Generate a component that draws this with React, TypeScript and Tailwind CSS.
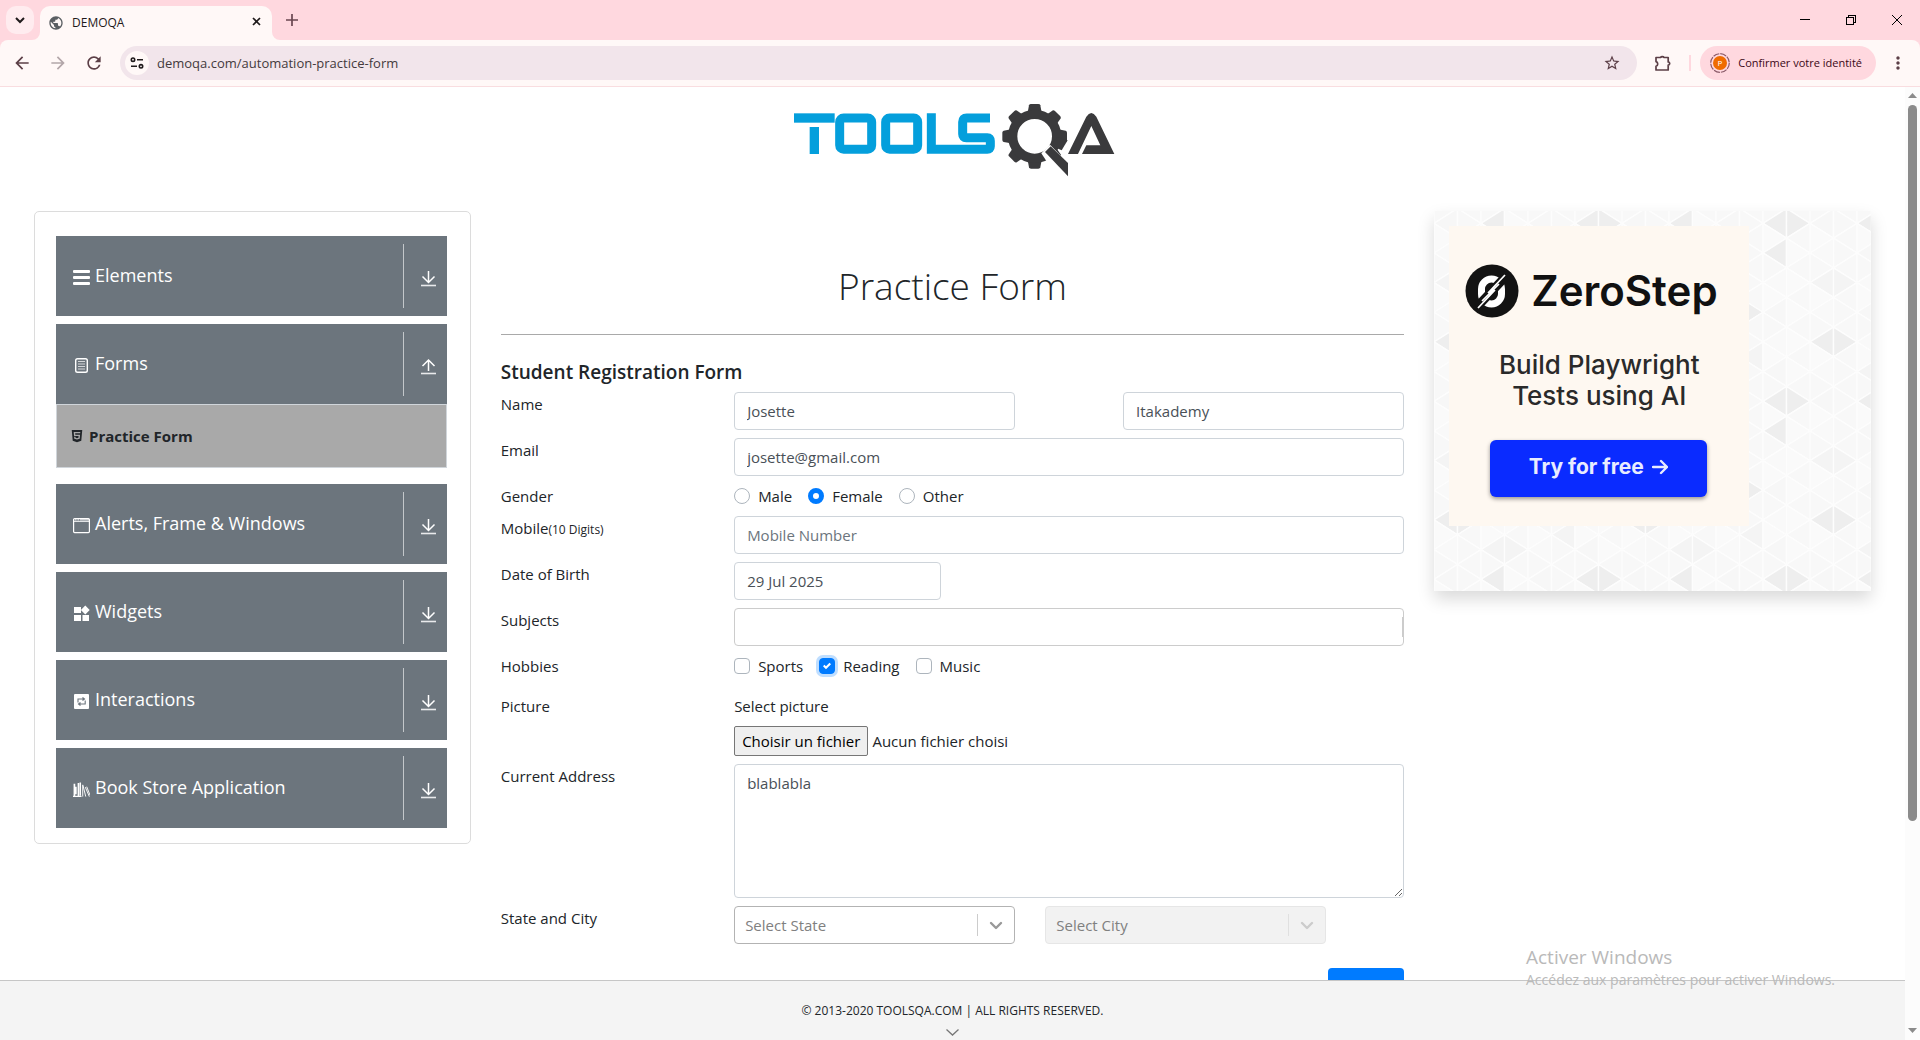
import React, { useState } from "react";
import { MdArrowBack, MdArrowForward, MdMoreVert, MdPublic, MdRefresh, MdStarBorder } from "react-icons/md";
import { FaHtml5 } from "react-icons/fa";

/* ---------- Browser chrome ---------- */

function TabStrip() {
  return (
    <div className="flex h-10 items-end bg-[#ffd8df] text-[#1f1a1b]">
      <button aria-label="Rechercher dans les onglets" className="mb-[6px] ml-[6px] flex h-7 w-7 items-center justify-center rounded-[10px] bg-[#ffecef]">
        <svg className="h-2 w-[10px]" viewBox="0 0 10 8" fill="none" stroke="#1f1a1b" strokeWidth="2">
          <path d="M1 2l4 4 4-4" />
        </svg>
      </button>
      <svg className="h-2 w-2 -ml-[2px]" viewBox="0 0 8 8" fill="#fff8f7">
        <path d="M8 0v8H0a8 8 0 0 0 8-8z" />
      </svg>
      <div className="flex h-[34px] w-[232px] items-center rounded-t-[10px] bg-[#fff8f7] pr-2 pl-2">
        <MdPublic className="h-4 w-4 text-[#5b5f63]" />
        <span className="ml-2 flex-1 text-[12px] leading-4">DEMOQA</span>
        <button aria-label="Fermer l'onglet" className="flex h-4 w-4 items-center justify-center pb-1">
          <svg className="h-[9px] w-[9px]" viewBox="0 0 9 9" stroke="#1f1a1b" strokeWidth="1.7">
            <path d="M1 1l7 7M8 1l-7 7" />
          </svg>
        </button>
      </div>
      <svg className="h-2 w-2" viewBox="0 0 8 8" fill="#fff8f7">
        <path d="M0 0v8h8a8 8 0 0 1-8-8z" />
      </svg>
      <button aria-label="Nouvel onglet" className="mb-[14px] ml-[6px] flex h-3 w-3 items-center justify-center">
        <svg className="h-3 w-3" viewBox="0 0 12 12" stroke="#6a4650" strokeWidth="1.7">
          <path d="M6 0v12M0 6h12" />
        </svg>
      </button>
      <div className="mb-[14px] ml-auto flex h-3 items-center gap-9 pr-[18px]">
        <button aria-label="Réduire">
          <svg className="h-[10px] w-[10px]" viewBox="0 0 10 10" stroke="#000" shapeRendering="crispEdges">
            <path d="M0 4.500h10" />
          </svg>
        </button>
        <button aria-label="Restaurer">
          <svg className="h-[10px] w-[10px]" viewBox="0 0 10 10" fill="none" stroke="#000" shapeRendering="crispEdges">
            <path d="M.5 2.500h7v7h-7zM2.500 2.500v-2h7v7h-2" />
          </svg>
        </button>
        <button aria-label="Fermer">
          <svg className="h-[10px] w-[10px]" viewBox="0 0 10 10" stroke="#000">
            <path d="M0 0l10 10M10 0L0 10" />
          </svg>
        </button>
      </div>
    </div>
  );
}

function Toolbar() {
  return (
    <div className="bg-[#ffd8df]">
      <div className="flex h-[47px] items-center rounded-t-[8px] border-b border-[#f9dde0] bg-[#fff8f7] pr-[12px] pl-3 text-[#5c3f47]">
        <button aria-label="Retour" className="w-5"><MdArrowBack className="h-5 w-5" /></button>
        <button aria-label="Avancer" className="ml-4 w-5 text-[#b3a6a9]"><MdArrowForward className="h-5 w-5" /></button>
        <button aria-label="Actualiser" className="ml-4 w-5"><MdRefresh className="h-5 w-5" /></button>
        <div className="ml-4 flex h-[34px] flex-1 items-center rounded-full bg-[#f2e5eb] pr-4 pl-[5px]">
          <button aria-label="Informations sur le site" className="flex h-6 w-6 items-center justify-center rounded-full bg-[#fff8f7]">
            <svg className="h-3 w-[14px]" viewBox="0 0 14 12" fill="none" stroke="#1f1a1b" strokeWidth="1.6">
              <circle cx="3" cy="2.700" r="1.700" />
              <path d="M7 2.700h6M1 9.300h6" />
              <circle cx="11" cy="9.300" r="1.700" />
            </svg>
          </button>
          <input
            aria-label="Adresse"
            readOnly
            value="demoqa.com/automation-practice-form"
            className="ml-2 block min-w-0 flex-1 bg-transparent text-[13px] leading-5 text-[#443a3d] outline-none"
          />
          <button aria-label="Ajouter aux favoris"><MdStarBorder className="h-[18px] w-[18px]" /></button>
        </div>
        <button aria-label="Extensions" className="ml-[17px]">
          <svg className="h-[18px] w-[18px]" viewBox="0 0 18 18" fill="none" stroke="currentColor" strokeWidth="1.700" strokeLinejoin="round">
            <path d="M2 3.500h4.500a2 1.600 0 0 1 3.600 0H14.200V8a1.400 1.400 0 0 1 0 3v5H2v-3.800a2.400 2.400 0 0 0 0-4.600z" />
          </svg>
        </button>
        <span className="ml-[17px] h-4 w-[2px] bg-[#ffd8df]" />
        <button className="ml-[9px] flex h-[34px] items-center rounded-full bg-[#ffd8df] pr-[14px] pl-[10px] text-[11px] text-[#3b0716]">
          <svg className="mr-2 h-5 w-5" viewBox="0 0 20 20">
            <circle cx="10" cy="10" r="9.300" fill="none" stroke="#8a5a68" strokeWidth="1.200" strokeDasharray="6.300 1" />
            <circle cx="10" cy="10" r="7" fill="#ef6c00" />
            <text x="10" y="12.600" textAnchor="middle" fontSize="7" fill="#fff" fontFamily="Roboto">P</text>
          </svg>
          Confirmer votre identité
        </button>
        <button aria-label="Menu" className="ml-3"><MdMoreVert className="h-5 w-5" /></button>
      </div>
    </div>
  );
}

function Scrollbar() {
  return (
    <div aria-hidden="true" className="flex w-[15px] shrink-0 flex-col items-center bg-[#fcfcfc]">
      <svg className="mt-[6px] h-[5px] w-[9px]" viewBox="0 0 9 5" fill="#8b8b8b"><path d="M4.500 0L9 5H0z" /></svg>
      <div className="mt-[7px] w-[9px] grow-[716] basis-0 rounded-full bg-[#8b8b8b]" />
      <div className="grow-[207] basis-0" />
      <svg className="mb-[7px] h-[5px] w-[9px]" viewBox="0 0 9 5" fill="#8b8b8b"><path d="M4.500 5L9 0H0z" /></svg>
    </div>
  );
}

/* ---------- Page header ---------- */

const TEETH = [0, 45, 90, 135, 180, 225, 270, 315];

function Logo() {
  return (
    <svg role="img" aria-label="TOOLSQA" className="h-[100px] w-[350px]" viewBox="-6 0 1050 300">
      <g fill="#049fdc">
        <rect x="42" y="70" width="122" height="28" />
        <rect x="89" y="111" width="28" height="81" />
      </g>
      <g fill="none" stroke="#049fdc" strokeWidth="27">
        <rect x="179" y="84" width="96" height="94" rx="12" />
        <rect x="317" y="84" width="96" height="94" rx="12" />
        <path d="M454 70v108h168q9 0 9-9v-16q0-10-9-10h-63q-11 0-11-11v-36q0-12 12-12h70" />
      </g>
      <g fill="#3a3a3c">
        {TEETH.map((a) => (
          <path key={a} transform={`rotate(${a} 764 139)`} d="M743 68l4-22q1-4 6-4h22q5 0 6 4l4 22z" />
        ))}
      </g>
      <circle cx="764" cy="139" r="66" fill="none" stroke="#3a3a3c" strokeWidth="28" />
      <path d="M784 190l26-26 60 62v50l-30 0z" fill="#fff" />
      <path d="M815 158l16 17 14 6 18-30-30-10z" fill="#3a3a3c" />
      <path d="M795 186l17-17 52 50v40z" fill="#3a3a3c" />
      <path d="M864 192l55-112q15-22 30 0l54 112H906l13-26h42l-27-58-40 84z" fill="#3a3a3c" />
    </svg>
  );
}

/* ---------- Left navigation ---------- */

const iconBox = "h-[17px] w-[17px]";

const ElementsIcon = () => (
  <svg className={iconBox} viewBox="0 0 17 17" fill="#fff">
    <rect y="1" width="17" height="3" rx="1" /><rect y="7" width="17" height="3" rx="1" /><rect y="13" width="17" height="3" rx="1" />
  </svg>
);
const FormsIcon = () => (
  <svg className={iconBox} viewBox="0 0 17 17" fill="none" stroke="#fff">
    <rect x="2.700" y="1.700" width="11.600" height="13.600" rx="1.800" strokeWidth="1.400" />
    <path d="M5 4.500h7M5 7h7M5 9.500h7M5 12h7" opacity=".7" />
  </svg>
);
const WindowIcon = () => (
  <svg className={iconBox} viewBox="0 0 17 17" fill="none" stroke="#fff">
    <rect x=".6" y="1.600" width="15.800" height="14" rx="1" strokeWidth="1.200" />
    <path d="M1 4.300h15" /><path d="M2 2.800h1.500M4.500 2.800H6M7 2.800h9" opacity=".6" strokeWidth="1.500" />
  </svg>
);
const WidgetsIcon = () => (
  <svg className={iconBox} viewBox="0 0 17 17" fill="#fff">
    <path d="M1 2h7v6H1zM1 10h7v6H1zM9.500 10h6.500v6H9.500zM12.300.6l4.400 4.400-4.400 4.400L7.900 5z" />
  </svg>
);
const SwapIcon = () => (
  <svg className={iconBox} viewBox="0 0 17 17">
    <rect x="1" y="1" width="15" height="15" rx="1" fill="#fff" />
    <path d="M5 9.500V6h6M9.500 4.500L11.500 6 9.500 7.500M12.200 7.500V11H6M7.500 9.500L5.500 11l2 1.500" fill="none" stroke="#6c757d" strokeWidth="1.100" />
  </svg>
);
const BooksIcon = () => (
  <svg className={iconBox} viewBox="0 0 18 17" fill="none" stroke="#fff">
    <path d="M1.500 2.500v13M3 5.500v8" strokeWidth="1.800" /><path d="M5.700 1.500v14M7.700 1v14" strokeWidth="1.600" />
    <path d="M0 15.800h9" strokeWidth="1.300" />
    <path d="M10.300 3.500v12.500M10.500 4l3 12M13 6l4.300 10M14.500 5.500l3.500 9" strokeWidth="1" />
  </svg>
);

function MoveArrow({ up }: { up?: boolean }) {
  return (
    <svg className="h-[17px] w-[15px]" viewBox="0 0 15 17" fill="none" stroke="#fff" strokeWidth="1.500">
      {up ? <path d="M7.500 13V2M1.500 8l6-6 6 6" /> : <path d="M7.500 1v11M1.500 6.500l6 6 6-6" />}
      <path d="M0 15.500h15" strokeWidth="1.600" opacity=".85" />
    </svg>
  );
}

function NavHeader({ icon, title, open }: { icon: React.ReactNode; title: string; open?: boolean }) {
  return (
    <button type="button" aria-expanded={!!open} className="flex h-20 w-full items-center bg-[#6c757d] pr-[11px] pl-[17px] text-left text-white">
      <span className="mt-[2px]">{icon}</span>
      <span className="mb-[2px] ml-[5px] flex-1 whitespace-nowrap text-[18px] leading-6">{title}</span>
      <span className="flex h-16 items-center border-l border-[#c3c7ca] pl-[17px]">
        <span className="mt-1"><MoveArrow up={open} /></span>
      </span>
    </button>
  );
}

function SideNav() {
  return (
    <nav className="col-span-3 self-start rounded-[5px] border border-[#dcdcdc] px-[21px] pt-6 pb-[15px]">
      <ul className="mr-[2px] flex flex-col gap-2">
        <li><NavHeader icon={<ElementsIcon />} title="Elements" /></li>
        <li className="mb-2">
          <NavHeader icon={<FormsIcon />} title="Forms" open />
          <a href="#practice" className="flex h-16 items-center border border-[#d0d5da] bg-[#a9a9a9] pl-[13px] text-[15px] font-bold text-[#212529]">
            <FaHtml5 className="mr-[5px] h-[14px] w-[14px]" />
            Practice Form
          </a>
        </li>
        <li><NavHeader icon={<WindowIcon />} title="Alerts, Frame & Windows" /></li>
        <li><NavHeader icon={<WidgetsIcon />} title="Widgets" /></li>
        <li><NavHeader icon={<SwapIcon />} title="Interactions" /></li>
        <li><NavHeader icon={<BooksIcon />} title="Book Store Application" /></li>
      </ul>
    </nav>
  );
}

/* ---------- Form ---------- */

const field = "block h-[38px] w-full rounded-[4px] border border-[#ced4da] bg-white px-3 text-[15px] text-[#495057] placeholder:text-[#6c757d] outline-none";

function Row({ label, htmlFor, children }: { label: React.ReactNode; htmlFor?: string; children: React.ReactNode }) {
  return (
    <div className="grid grid-cols-12 gap-x-[30px]">
      {htmlFor ? <label htmlFor={htmlFor} className="col-span-3">{label}</label> : <span className="col-span-3">{label}</span>}
      {children}
    </div>
  );
}

function Radio({ name, value, onPick }: { name: string; value: string; onPick: (v: string) => void }) {
  return (
    <label className="flex items-center gap-2">
      <input
        type="radio"
        name="gender"
        checked={name === value}
        onChange={() => onPick(name)}
        className="h-4 w-4 appearance-none rounded-full border border-[#adb5bd] bg-white checked:border-[5px] checked:border-[#007bff]"
      />
      {name}
    </label>
  );
}

function Check({ name, on, toggle }: { name: string; on: boolean; toggle: () => void }) {
  return (
    <label className="flex items-center gap-2">
      <span className="relative flex">
        <input
          type="checkbox"
          checked={on}
          onChange={toggle}
          className="h-4 w-4 appearance-none rounded-[4px] border border-[#adb5bd] bg-white checked:border-[#007bff] checked:bg-[#007bff] checked:ring-3 checked:ring-[#bfdeff]"
        />
        {on && (
          <svg className="pointer-events-none absolute inset-1 h-2 w-2" viewBox="0 0 8 8" fill="#fff">
            <path d="M6.564.75l-3.590 3.612-1.538-1.550L0 4.260 2.974 7.250 8 2.193z" />
          </svg>
        )}
      </span>
      {name}
    </label>
  );
}

function Picker({ id, text, disabled }: { id: string; text: string; disabled?: boolean }) {
  return (
    <div className="relative">
      <select
        id={id}
        aria-label={text}
        disabled={disabled}
        className="block h-[38px] w-full appearance-none rounded-[4px] border border-[#b3b3b3] bg-white pl-[10px] text-[15px] text-[#808080] disabled:border-[#e6e6e6] disabled:bg-[#f2f2f2] disabled:opacity-100"
      >
        <option>{text}</option>
      </select>
      <div className={disabled ? "pointer-events-none absolute inset-y-2 right-[9px] flex items-center border-l border-[#e0e0e0] pl-2 text-[#ccc]" : "pointer-events-none absolute inset-y-2 right-[9px] flex items-center border-l border-[#ccc] pl-2 text-[#999]"}>
        <svg className="h-5 w-5" viewBox="0 0 20 20" fill="none" stroke="currentColor" strokeWidth="2.400" strokeLinecap="round" strokeLinejoin="round">
          <path d="M5 8l5 5 5-5" />
        </svg>
      </div>
    </div>
  );
}

function PracticeForm() {
  const [gender, setGender] = useState("Female");
  const [hobbies, setHobbies] = useState<string[]>(["Reading"]);
  const flip = (h: string) => setHobbies((l) => (l.includes(h) ? l.filter((x) => x !== h) : [...l, h]));

  return (
    <main className="col-span-6 text-[15px] leading-6 text-[#212529]">
      <h1 className="mt-[51px] border-b border-[#a9a9a9] pb-6 text-center text-[37px] leading-[48px] font-light">Practice Form</h1>
      <h5 className="mt-[25px] mb-2 text-[19px] leading-6 font-semibold">Student Registration Form</h5>
      <form className="flex flex-col gap-2" onSubmit={(e) => e.preventDefault()}>
        <Row label="Name" htmlFor="first">
          <div className="col-span-4"><input id="first" className={field} defaultValue="Josette" /></div>
          <div className="col-span-4 col-start-9"><input aria-label="Last name" className={field} defaultValue="Itakademy" /></div>
        </Row>
        <Row label="Email" htmlFor="email">
          <div className="col-span-9"><input id="email" className={field} defaultValue="josette@gmail.com" /></div>
        </Row>
        <Row label="Gender">
          <div className="col-span-9 flex gap-4">
            {["Male", "Female", "Other"].map((g) => <Radio key={g} name={g} value={gender} onPick={setGender} />)}
          </div>
        </Row>
        <Row label={<>Mobile<small className="text-[12px]">(10 Digits)</small></>} htmlFor="mobile">
          <div className="col-span-9"><input id="mobile" className={field} placeholder="Mobile Number" /></div>
        </Row>
        <Row label="Date of Birth" htmlFor="dob">
          <div className="col-span-9"><div className="w-[207px]"><input id="dob" className={field} defaultValue="29 Jul 2025" /></div></div>
        </Row>
        <Row label="Subjects" htmlFor="subjects">
          <div className="col-span-9 flex h-[38px] items-center rounded-[4px] border border-[#ccc] bg-white">
            <input id="subjects" className="h-full flex-1 px-3 outline-none" />
            <span className="h-5 w-px bg-[#ccc]" />
          </div>
        </Row>
        <Row label="Hobbies">
          <div className="col-span-9 flex gap-4 pb-2">
            {["Sports", "Reading", "Music"].map((h) => <Check key={h} name={h} on={hobbies.includes(h)} toggle={() => flip(h)} />)}
          </div>
        </Row>
        <Row label="Picture">
          <div className="col-span-9 flex flex-col gap-2">
            <label htmlFor="picture">Select picture</label>
            <div className="flex items-center">
              <input id="picture" type="file" className="sr-only" />
              <label htmlFor="picture" className="flex h-[30px] items-center rounded-[2px] border border-[#767676] bg-[#efefef] px-[7px] text-black">Choisir un fichier</label>
              <span className="ml-1">Aucun fichier choisi</span>
            </div>
          </div>
        </Row>
        <Row label="Current Address" htmlFor="address">
          <textarea id="address" defaultValue="blablabla" className="col-span-9 block h-[134px] resize-y rounded-[4px] border border-[#ced4da] px-3 py-[6px] text-[#495057] outline-none" />
        </Row>
        <Row label="State and City" htmlFor="state">
          <div className="col-span-4"><Picker id="state" text="Select State" /></div>
          <div className="col-span-4"><Picker id="city" text="Select City" disabled /></div>
        </Row>
        <div className="mt-4 flex justify-end">
          <button type="submit" className="h-[38px] w-[76px] rounded-[4px] bg-[#007bff] text-white">Submit</button>
        </div>
      </form>
    </main>
  );
}

/* ---------- Advertisement ---------- */

const CW = 23.5;
const HH = 14.83;
// Darker cells of the wallpaper tile, as "column:half-row"
const DARK = new Set(["2:0", "6:0", "7:0", "6:2", "0:8", "1:8", "5:6"]);
const SOFT = new Set(["0:4", "1:4", "5:9", "2:10", "3:10"]);

function Wallpaper() {
  const cells: React.ReactNode[] = [];
  for (let c = 0; c < 8; c++) {
    for (let r = -1; r <= 13; r++) {
      const k = (r + 12) % 12;
      const x = c * CW;
      const y = 12.3 + r * HH;
      const left = (c + r + 12) % 2 === 0;
      const id = `${c}:${k}`;
      const shade = 247 + ((c * 5 + k * 7 + c * k) % 4);
      const fill = DARK.has(id) ? "#eeeeee" : SOFT.has(id) ? "#f4f4f4" : `rgb(${shade},${shade},${shade})`;
      const pts = left ? `${x},${y} ${x + CW},${y - HH} ${x + CW},${y + HH}` : `${x + CW},${y} ${x},${y - HH} ${x},${y + HH}`;
      cells.push(<polygon key={`${c}_${r}`} points={pts} fill={fill} stroke="#fdfdfd" strokeWidth="1.400" />);
    }
  }
  return (
    <svg aria-hidden="true" className="absolute inset-0 h-full w-full">
      <defs>
        <pattern id="tri" width="188" height="178" patternUnits="userSpaceOnUse">{cells}</pattern>
      </defs>
      <rect width="100%" height="100%" fill="url(#tri)" />
    </svg>
  );
}

function Ad() {
  return (
    <aside className="relative col-span-3 self-start px-[15px] pt-[15px] pb-[65px] shadow-[0_8px_16px_rgba(0,0,0,0.15)]">
      <Wallpaper />
      <a href="#zerostep" className="relative flex h-[300px] w-[300px] flex-col items-center bg-[#fef8f1] font-[Inter] text-[#111]">
        <span className="mt-[38px] flex w-full items-center pl-[16px]">
          <svg className="h-[54px] w-[54px]" viewBox="0 0 54 54">
            <circle cx="27" cy="27" r="26.500" fill="#131313" />
            <rect x="16.500" y="15" width="20" height="25" rx="10" fill="none" stroke="#fff" strokeWidth="7" />
            <path d="M11 44L43 10" stroke="#131313" strokeWidth="9" />
            <path d="M13 44l17-18M23 29L40 11M17 37l17-17" stroke="#fff" strokeWidth="1.700" />
          </svg>
          <span className="ml-3 text-[42px] leading-[54px] font-semibold">ZeroStep</span>
        </span>
        <span className="mt-[31px] text-center text-[26px] leading-[31px] font-medium text-[#2a2a2a]">Build Playwright<br />Tests using AI</span>
        <span className="mt-[29px] mr-[2px] flex h-[57px] w-[217px] items-center justify-center rounded-[6px] bg-[#0a2bff] pb-[3px] text-[21px] font-bold text-[#e8ecff] shadow-[0_2px_4px_rgba(0,0,0,0.4)]">
          Try for free
          <svg className="ml-2 h-4 w-4" viewBox="0 0 16 16" fill="none" stroke="currentColor" strokeWidth="2.400" strokeLinecap="round" strokeLinejoin="round">
            <path d="M1 8h14M9 2l6 6-6 6" />
          </svg>
        </span>
      </a>
    </aside>
  );
}

/* ---------- Page ---------- */

export default function App() {
  return (
    <div className="relative flex h-screen flex-col overflow-hidden bg-white font-['Open_Sans','Noto_Sans',sans-serif]">
      <TabStrip />
      <Toolbar />
      <div className="flex min-h-0 flex-1">
        <div className="flex min-w-0 flex-1 flex-col">
          <div className="min-h-0 flex-1 overflow-y-auto [scrollbar-width:none]">
            <header className="flex h-[124px] justify-center pt-[3px]">
              <a href="#home"><Logo /></a>
            </header>
            <div className="grid grid-cols-12 gap-x-[30px] px-[34px] pb-10">
              <SideNav />
              <PracticeForm />
              <Ad />
            </div>
          </div>
          <footer className="flex h-[60px] shrink-0 flex-col items-center border-t border-[#c6c6c6] bg-[#f4f4f4] pt-[21px] text-[12px] leading-[18px] text-[#212529]">
            <span>© 2013-2020 TOOLSQA.COM | ALL RIGHTS RESERVED.</span>
            <svg className="mt-[9px] h-[7px] w-[13px]" viewBox="0 0 13 7" fill="none" stroke="#777" strokeWidth="1.300">
              <path d="M.5.5l6 5.500 6-5.500" />
            </svg>
          </footer>
        </div>
        <Scrollbar />
      </div>
      <div className="pointer-events-none absolute right-[80px] bottom-[50px] w-[314px] whitespace-nowrap text-[#b9b9b9]">
        <div className="text-[19px] leading-[26px]">Activer Windows</div>
        <div className="text-[14px] leading-5">Accédez aux paramètres pour activer Windows.</div>
      </div>
    </div>
  );
}
